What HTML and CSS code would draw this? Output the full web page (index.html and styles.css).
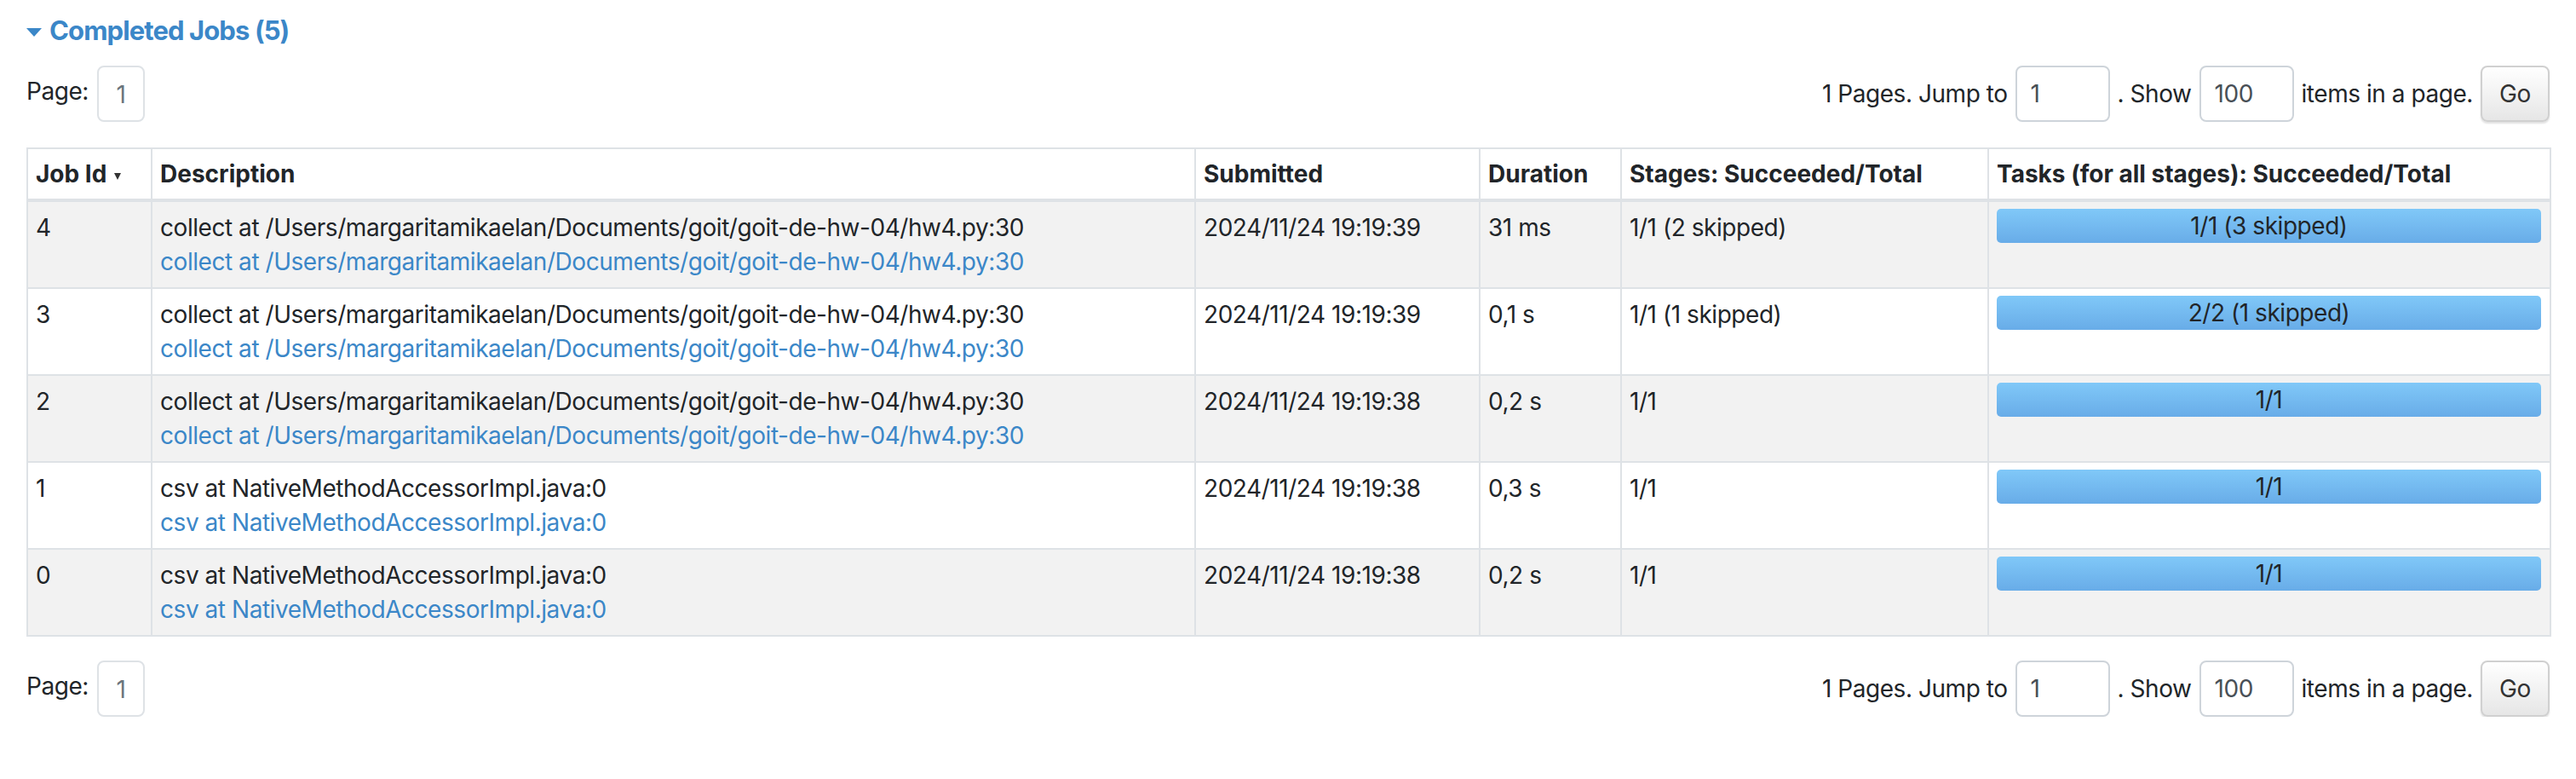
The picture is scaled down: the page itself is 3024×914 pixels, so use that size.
FILE: index.html
```html
<!DOCTYPE html>
<html lang="en">
<head>
<meta charset="utf-8">
<title>Completed Jobs</title>
<link rel="stylesheet" href="styles.css">
</head>
<body>
<div class="page">
  <h4 class="section-title"><span class="collapse-arrow"></span><a class="title-link">Completed Jobs (5)</a></h4>

  <div class="pager">
    <div class="pager-left"><span class="page-label">Page:</span><span class="page-box">1</span></div>
    <div class="pager-right">
      <span>1 Pages. Jump to</span>
      <input class="pager-input" type="text" value="1">
      <span>. Show</span>
      <input class="pager-input" type="text" value="100">
      <span>items in a page.</span>
      <button class="go-btn" type="button">Go</button>
    </div>
  </div>

  <table class="jobs">
    <colgroup>
      <col class="c-id"><col class="c-desc"><col class="c-sub"><col class="c-dur"><col class="c-stages"><col class="c-tasks">
    </colgroup>
    <thead>
      <tr>
        <th>Job Id <span class="sort-arrow"></span></th>
        <th>Description</th>
        <th>Submitted</th>
        <th>Duration</th>
        <th>Stages: Succeeded/Total</th>
        <th>Tasks (for all stages): Succeeded/Total</th>
      </tr>
    </thead>
    <tbody>
      <tr>
        <td>4</td>
        <td><div>collect at /Users/margaritamikaelan/Documents/goit/goit-de-hw-04/hw4.py:30</div><a class="name-link">collect at /Users/margaritamikaelan/Documents/goit/goit-de-hw-04/hw4.py:30</a></td>
        <td>2024/11/24 19:19:39</td>
        <td>31 ms</td>
        <td>1/1 (2 skipped)</td>
        <td><div class="progress"><div class="progress-fill" style="width:100%"></div><span class="progress-label">1/1 (3 skipped)</span></div></td>
      </tr>
      <tr>
        <td>3</td>
        <td><div>collect at /Users/margaritamikaelan/Documents/goit/goit-de-hw-04/hw4.py:30</div><a class="name-link">collect at /Users/margaritamikaelan/Documents/goit/goit-de-hw-04/hw4.py:30</a></td>
        <td>2024/11/24 19:19:39</td>
        <td>0,1 s</td>
        <td>1/1 (1 skipped)</td>
        <td><div class="progress"><div class="progress-fill" style="width:100%"></div><span class="progress-label">2/2 (1 skipped)</span></div></td>
      </tr>
      <tr>
        <td>2</td>
        <td><div>collect at /Users/margaritamikaelan/Documents/goit/goit-de-hw-04/hw4.py:30</div><a class="name-link">collect at /Users/margaritamikaelan/Documents/goit/goit-de-hw-04/hw4.py:30</a></td>
        <td>2024/11/24 19:19:38</td>
        <td>0,2 s</td>
        <td>1/1</td>
        <td><div class="progress"><div class="progress-fill" style="width:100%"></div><span class="progress-label">1/1</span></div></td>
      </tr>
      <tr>
        <td>1</td>
        <td><div>csv at NativeMethodAccessorImpl.java:0</div><a class="name-link">csv at NativeMethodAccessorImpl.java:0</a></td>
        <td>2024/11/24 19:19:38</td>
        <td>0,3 s</td>
        <td>1/1</td>
        <td><div class="progress"><div class="progress-fill" style="width:100%"></div><span class="progress-label">1/1</span></div></td>
      </tr>
      <tr>
        <td>0</td>
        <td><div>csv at NativeMethodAccessorImpl.java:0</div><a class="name-link">csv at NativeMethodAccessorImpl.java:0</a></td>
        <td>2024/11/24 19:19:38</td>
        <td>0,2 s</td>
        <td>1/1</td>
        <td><div class="progress"><div class="progress-fill" style="width:100%"></div><span class="progress-label">1/1</span></div></td>
      </tr>
    </tbody>
  </table>

  <div class="pager pager-bottom">
    <div class="pager-left"><span class="page-label">Page:</span><span class="page-box">1</span></div>
    <div class="pager-right">
      <span>1 Pages. Jump to</span>
      <input class="pager-input" type="text" value="1">
      <span>. Show</span>
      <input class="pager-input" type="text" value="100">
      <span>items in a page.</span>
      <button class="go-btn" type="button">Go</button>
    </div>
  </div>
</div>
</body>
</html>
```

FILE: styles.css
```css
html, body {
  margin: 0;
  padding: 0;
  background: #ffffff;
}

body {
  font-family: Inter, "Noto Sans", "Liberation Sans", sans-serif;
  font-size: 28px;
  line-height: 40px;
  letter-spacing: -0.45px;
  color: #212529;
}

.page {
  padding: 16px 31px 0;
}

.section-title {
  display: flex;
  align-items: center;
  margin: 0 0 21px;
  font-size: 31px;
  line-height: 40px;
  font-weight: 700;
  letter-spacing: -0.9px;
  color: #3b87c8;
}

.collapse-arrow {
  width: 0;
  height: 0;
  margin: 4px 9px 0 0;
  border-left: 9.5px solid transparent;
  border-right: 9.5px solid transparent;
  border-top: 10px solid #3b87c8;
}

.title-link {
  color: #3b87c8;
}

.pager {
  display: flex;
  justify-content: space-between;
  align-items: center;
  height: 66px;
  margin-bottom: 30px;
}

.pager-bottom {
  margin: 28px 0 0;
}

.pager-left {
  display: flex;
  align-items: center;
  gap: 10px;
}

.page-label {
  margin-bottom: 6px;
}

.page-box {
  box-sizing: border-box;
  width: 56px;
  height: 66px;
  display: flex;
  align-items: center;
  justify-content: center;
  border: 2px solid #dee2e6;
  border-radius: 8px;
  color: #6c757d;
  padding-top: 2px;
}

.pager-right {
  display: flex;
  align-items: center;
  gap: 9px;
}

.pager-input {
  box-sizing: border-box;
  width: 111px;
  height: 66px;
  margin: 0;
  padding: 0 16px;
  border: 2px solid #ced4da;
  border-radius: 8px;
  font-family: Inter, "Noto Sans", "Liberation Sans", sans-serif;
  font-size: 28px;
  letter-spacing: -0.45px;
  color: #495057;
  background: #fff;
  outline: none;
}

.go-btn {
  box-sizing: border-box;
  width: 81px;
  height: 66px;
  margin: 0;
  padding: 0;
  border: 2px solid #d0d0d0;
  border-radius: 8px;
  background: linear-gradient(#ffffff, #e6e6e6);
  box-shadow: 0 2px 2px rgba(0, 0, 0, 0.12);
  font-family: Inter, "Noto Sans", "Liberation Sans", sans-serif;
  font-size: 28px;
  letter-spacing: -0.45px;
  color: #333333;
}

.jobs {
  width: 100%;
  table-layout: fixed;
  border-collapse: separate;
  border-spacing: 0;
  border-top: 2px solid #dee2e6;
  border-left: 2px solid #dee2e6;
}

.c-id { width: 146px; }
.c-desc { width: 1225px; }
.c-sub { width: 334px; }
.c-dur { width: 166px; }
.c-stages { width: 431px; }
.c-tasks { width: 660px; }

.jobs th,
.jobs td {
  text-align: left;
  vertical-align: top;
  border-right: 2px solid #dee2e6;
  border-bottom: 2px solid #dee2e6;
  padding: 10px 10px 10px 9px;
  white-space: nowrap;
  overflow: hidden;
}

.jobs th {
  font-weight: 700;
  letter-spacing: 0;
  padding-top: 9px;
  padding-bottom: 9px;
  border-bottom-width: 4px;
  background: #fff;
}

.jobs tbody tr:nth-child(odd) td {
  background: #f2f2f2;
}

.jobs tbody tr:nth-child(even) td {
  background: #ffffff;
}

.sort-arrow {
  display: inline-block;
  width: 0;
  height: 0;
  margin-left: 2px;
  vertical-align: 3px;
  border-left: 4px solid transparent;
  border-right: 4px solid transparent;
  border-top: 8px solid #333;
}

.name-link {
  display: block;
  color: #3b87c8;
}

.progress {
  position: relative;
  height: 40px;
  margin-top: -2px;
  border-radius: 5px;
  overflow: hidden;
}

.progress-fill {
  height: 100%;
  background: linear-gradient(#80c8f8, #68ace8);
}

.progress-label {
  position: absolute;
  left: 0;
  right: 0;
  top: 0;
  text-align: center;
  line-height: 40px;
  color: #212529;
}
```
